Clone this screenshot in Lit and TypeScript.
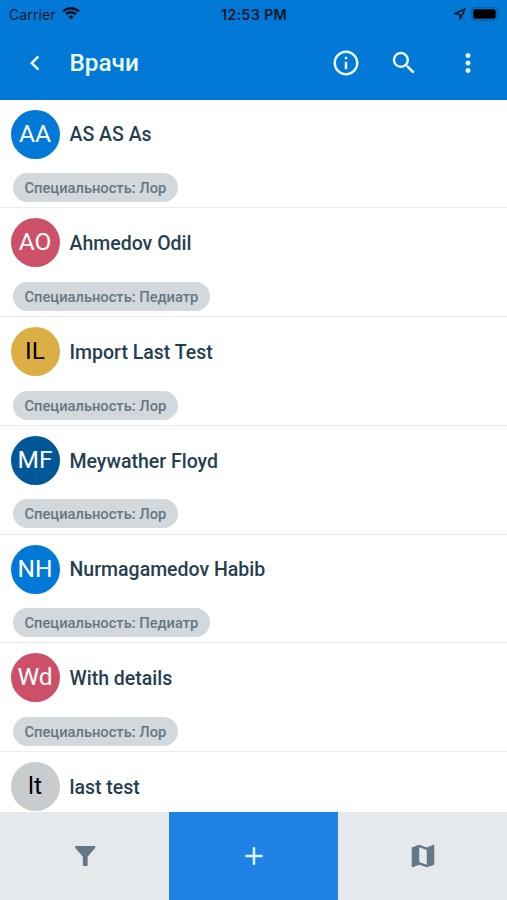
import { LitElement, html, css, svg, nothing } from "lit";
import { customElement, property } from "lit/decorators.js";

interface Doctor {
  initials: string;
  name: string;
  tag?: string;
  color: string;
  ink: string;
}

const DOCTORS: Doctor[] = [
  { initials: "AA", name: "AS AS As", tag: "Лор", color: "#0279d7", ink: "#fff" },
  { initials: "AO", name: "Ahmedov Odil", tag: "Педиатр", color: "#cd5068", ink: "#fff" },
  { initials: "IL", name: "Import Last Test", tag: "Лор", color: "#dbae43", ink: "#000" },
  { initials: "MF", name: "Meywather Floyd", tag: "Лор", color: "#025799", ink: "#fff" },
  { initials: "NH", name: "Nurmagamedov Habib", tag: "Педиатр", color: "#0279d7", ink: "#fff" },
  { initials: "Wd", name: "With details", tag: "Лор", color: "#cd5068", ink: "#fff" },
  { initials: "lt", name: "last test", color: "#c8cccf", ink: "#000" },
];

const ICONS: Record<string, string> = {
  back: "M15.41 16.59 10.83 12l4.58-4.59L14 6l-6 6 6 6z",
  info: "M11 7h2v2h-2zm0 4h2v6h-2zm1-9C6.48 2 2 6.48 2 12s4.48 10 10 10 10-4.48 10-10S17.52 2 12 2zm0 18c-4.41 0-8-3.59-8-8s3.59-8 8-8 8 3.59 8 8-3.59 8-8 8z",
  search:
    "M15.5 14h-.79l-.28-.27A6.471 6.471 0 0 0 16 9.5 6.5 6.5 0 1 0 9.5 16c1.61 0 3.09-.59 4.23-1.57l.27.28v.79l5 4.99L20.49 19l-4.99-5zm-6 0C7.01 14 5 11.99 5 9.5S7.01 5 9.5 5 14 7.01 14 9.5 11.99 14 9.5 14z",
  more: "M12 8c1.1 0 2-.9 2-2s-.9-2-2-2-2 .9-2 2 .9 2 2 2zm0 2c-1.1 0-2 .9-2 2s.9 2 2 2 2-.9 2-2-.9-2-2-2zm0 6c-1.1 0-2 .9-2 2s.9 2 2 2 2-.9 2-2-.9-2-2-2z",
  filter: "M4.5 4h15.3q.4 0 .4.4v.9l-6.1 7.3v6.8q0 .6-.6.6h-2.6q-.6 0-.6-.6v-6.8L4.1 5.3v-.9q0-.4.4-.4z",
  add: "M19 13h-6v6h-2v-6H5v-2h6V5h2v6h6z",
  map: "M15 19 9 16.89V5l6 2.11M20.5 3h-.16L15 5.1 9 3 3.36 4.9A.5.5 0 0 0 3 5.38V20.5a.5.5 0 0 0 .66.47L9 18.9l6 2.1 5.64-1.9a.5.5 0 0 0 .36-.48V3.5a.5.5 0 0 0-.5-.5z",
};

const icon = (name: string) => html`
  <svg class="icon" viewBox="0 0 24 24">${svg`<path fill-rule="evenodd" d=${ICONS[name]} />`}</svg>
`;

@customElement("status-bar")
class StatusBar extends LitElement {
  static styles = css`
    :host {
      display: grid;
      grid-template-columns: 1fr auto 1fr;
      align-items: center;
      height: 27px;
      padding: 0 7px 0 9px;
      box-sizing: border-box;
      color: #04182b;
      font: 400 14px/27px Inter, "Liberation Sans", sans-serif;
    }
    .side {
      display: flex;
      align-items: center;
      gap: 6.5px;
    }
    .end {
      justify-content: flex-end;
      gap: 5px;
    }
    .text {
      padding-top: 1px;
    }
    .carrier {
      letter-spacing: 0.1px;
    }
    .time {
      font-weight: 600;
      font-size: 14.4px;
      letter-spacing: 0.25px;
      margin-right: 1px;
    }
    .wifi {
      margin-top: -2px;
    }
    svg {
      display: block;
    }
  `;

  render() {
    return html`
      <div class="side">
        <span class="text carrier">Carrier</span>
        <svg class="wifi" width="18" height="14" viewBox="0 0 19 14" fill="none" stroke="#04111e" stroke-width="2.5">
          <path d="M1.2 5.3a11.9 11.9 0 0 1 16.6 0" />
          <path d="M4.2 8.4a7.6 7.6 0 0 1 10.6 0" />
          <path d="M9.5 13.7 6.7 10.9a4 4 0 0 1 5.6 0z" fill="#04111e" stroke="none" />
        </svg>
      </div>
      <span class="text time">12:53 PM</span>
      <div class="side end">
        <svg width="12" height="12" viewBox="0 0 12 12" fill="none" stroke="#04182b" stroke-width="1.6" stroke-linejoin="round">
          <path d="M11 1 1 5.6l4.7.7.6 4.7z" />
        </svg>
        <svg width="29" height="14" viewBox="0 0 29 14">
          <rect x=".6" y=".6" width="25.6" height="12.8" rx="3.6" fill="none" stroke="#0461ac" stroke-width="1.2" />
          <rect x="2.2" y="2.2" width="22.4" height="9.6" rx="2" fill="#000" />
          <path d="M27.3 4.8c1.5.8 1.5 3.6 0 4.4z" fill="#0461ac" />
        </svg>
      </div>
    `;
  }
}

@customElement("title-bar")
class TitleBar extends LitElement {
  static styles = css`
    :host {
      display: flex;
      align-items: center;
      height: 72.5px;
      padding: 0 24.5px 0 19.5px;
      box-sizing: border-box;
      color: #e9fbff;
    }
    .icon {
      display: block;
      width: 30px;
      height: 30px;
      fill: currentColor;
    }
    .title {
      flex: 1;
      margin-left: 20px;
      font: 500 24.3px/30px Roboto, sans-serif;
    }
    .actions {
      display: flex;
    }
    .action {
      margin-left: 28.5px;
    }
    .last {
      margin-left: 33.5px;
    }
  `;

  render() {
    return html`
      ${icon("back")}
      <div class="title">Врачи</div>
      <div class="actions">
        <div class="action">${icon("info")}</div>
        <div class="action">${icon("search")}</div>
        <div class="action last">${icon("more")}</div>
      </div>
    `;
  }
}

@customElement("doctor-row")
class DoctorRow extends LitElement {
  @property({ attribute: false }) doctor!: Doctor;

  static styles = css`
    :host {
      display: block;
      flex: none;
      height: 108.75px;
      box-sizing: border-box;
      padding: 10px 10.5px 0;
      border-bottom: 1px solid #e9ecee;
      font-family: Roboto, sans-serif;
    }
    .person {
      display: flex;
      align-items: center;
      gap: 10px;
      height: 49px;
    }
    .avatar {
      width: 49px;
      height: 49px;
      border-radius: 50%;
      text-align: center;
      font-size: 24.5px;
      line-height: 48px;
    }
    .name {
      color: #263f50;
      font-size: 19.5px;
      line-height: 26px;
      font-weight: 500;
      padding-top: 2.5px;
    }
    .tag {
      display: inline-block;
      margin: 14.5px 0 0 2.5px;
      height: 29px;
      padding: 0 11.5px;
      border-radius: 15px;
      background: #d2d8dc;
      color: #667783;
      font-size: 14.7px;
      line-height: 30px;
      font-weight: 500;
      white-space: nowrap;
    }
  `;

  render() {
    const d = this.doctor;
    return html`
      <div class="person">
        <div class="avatar" style="background:${d.color};color:${d.ink}">${d.initials}</div>
        <div class="name">${d.name}</div>
      </div>
      ${d.tag ? html`<div class="tag">Специальность: ${d.tag}</div>` : nothing}
    `;
  }
}

@customElement("app-root")
class AppRoot extends LitElement {
  static styles = css`
    :host {
      display: flex;
      flex-direction: column;
      width: 507px;
      height: 900px;
      overflow: hidden;
      background: #fff;
    }
    .header {
      flex: none;
      background: #0279d7;
    }
    .list {
      flex: 1;
      min-height: 0;
      overflow: hidden;
      display: flex;
      flex-direction: column;
    }
    .toolbar {
      flex: none;
      display: grid;
      grid-template-columns: 169.4px 169px 1fr;
      height: 88px;
      background: #e5e9ec;
      color: #647785;
    }
    .cell {
      display: flex;
      align-items: center;
      justify-content: center;
    }
    .primary {
      background: #1e82e4;
      color: #dff6ff;
    }
    .icon {
      display: block;
      width: 30px;
      height: 30px;
      fill: currentColor;
    }
  `;

  render() {
    return html`
      <div class="header">
        <status-bar></status-bar>
        <title-bar></title-bar>
      </div>
      <div class="list">${DOCTORS.map((d) => html`<doctor-row .doctor=${d}></doctor-row>`)}</div>
      <div class="toolbar">
        <div class="cell">${icon("filter")}</div>
        <div class="cell primary">${icon("add")}</div>
        <div class="cell">${icon("map")}</div>
      </div>
    `;
  }
}
